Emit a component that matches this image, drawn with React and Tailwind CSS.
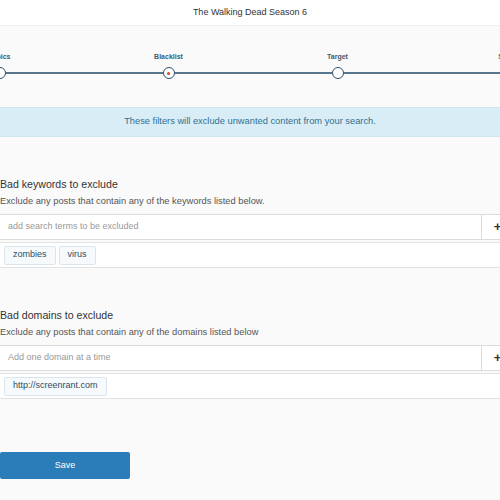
import React from "react";

function Step({ label, active }) {
  return (
    <div className="w-[169px] shrink-0 flex flex-col items-center">
      <div className="h-[14px] text-[7px] font-bold text-[#3d5a70] leading-[14px]">{label}</div>
      <div className="w-full flex items-center mt-[3px]">
        <div className="flex-1 h-[2px] bg-[#58768c]" />
        <div className="w-[12px] h-[12px] rounded-full border-[1.5px] border-[#2f4f66] bg-white flex items-center justify-center">
          {active && <div className="w-[3px] h-[3px] rounded-full bg-[#e0401e]" />}
        </div>
        <div className="flex-1 h-[2px] bg-[#58768c]" />
      </div>
    </div>
  );
}

function Tag({ children }) {
  return (
    <span className="h-[19px] px-[8px] flex items-center border border-[#dbe5eb] bg-[#f6fafc] rounded-[2px] text-[9px] text-[#2e4b63]">
      {children}
    </span>
  );
}

function Section({ title, desc, placeholder, tags, className }) {
  return (
    <div className={className}>
      <div className="text-[10.6px] text-[#333] leading-[14px]">{title}</div>
      <div className="text-[9.3px] text-[#555] leading-[12px] mt-[4px]">{desc}</div>
      <div className="flex h-[26px] mt-[7px] ml-[-6px] w-[520px] border border-[#dcdcdc] bg-white">
        <div className="flex-1 flex items-center pl-[13px] text-[9px] text-[#999]">{placeholder}</div>
        <div className="w-[32px] border-l border-[#dcdcdc] flex items-center justify-center text-[13px] font-bold text-[#333] leading-none pb-[1px]">+</div>
      </div>
      <div className="flex gap-[3px] items-center h-[26px] mt-[2px] ml-[-6px] w-[520px] pl-[9px] border border-[#e2e2e2] bg-white">
        {tags.map((t) => (
          <Tag key={t}>{t}</Tag>
        ))}
      </div>
    </div>
  );
}

export default function App() {
  return (
    <div className="w-[500px] h-[500px] overflow-hidden bg-[#fafafa]" style={{ fontFamily: '"Liberation Sans", Arial, sans-serif' }}>
      <div className="h-[26px] bg-white border-b border-[#efefef] flex items-center justify-center text-[9px] text-[#333]">
        The Walking Dead Season 6
      </div>
      <div className="flex ml-[-85px] mt-[24px]">
        <Step label="Topics" />
        <Step label="Blacklist" active />
        <Step label="Target" />
        <Step label="Save" />
      </div>
      <div className="mt-[28px] h-[30px] bg-[#d9edf7] border-y border-[#cfe6f1] flex items-center justify-center text-[9.3px] text-[#31708f]">
        These filters will exclude unwanted content from your search.
      </div>
      <Section
        className="mt-[40px]"
        title="Bad keywords to exclude"
        desc="Exclude any posts that contain any of the keywords listed below."
        placeholder="add search terms to be excluded"
        tags={["zombies", "virus"]}
      />
      <Section
        className="mt-[40px]"
        title="Bad domains to exclude"
        desc="Exclude any posts that contain any of the domains listed below"
        placeholder="Add one domain at a time"
        tags={["http://screenrant.com"]}
      />
      <div className="mt-[53px] w-[130px] h-[27px] bg-[#2a7db8] rounded-[2px] flex items-center justify-center text-[9px] text-white">
        Save
      </div>
    </div>
  );
}
